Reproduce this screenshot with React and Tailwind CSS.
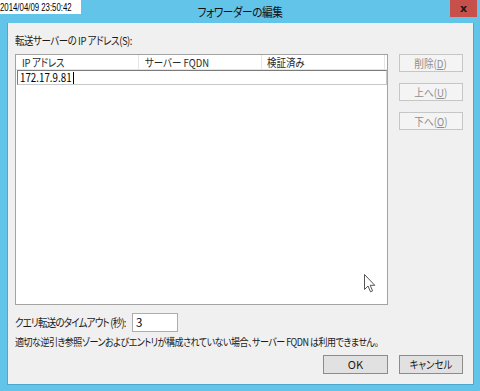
import React from 'react'

const jp = "font-['Noto_Sans_CJK_JP',sans-serif] [font-feature-settings:'palt']"

// Meiryo UI is narrow; squeeze Noto Sans CJK horizontally to match
function T({ children, className = '' }) {
  return <span className={`inline-block whitespace-nowrap origin-left scale-x-[0.86] ${className}`}>{children}</span>
}

function SideButton({ label, keyChar }) {
  return (
    <div className="w-[64px] h-[18px] border border-[#c6c6c6] bg-[#f4f4f4] flex items-center justify-center text-[11px] text-[#8d8d8d] leading-none">
      <span className="inline-block scale-x-[0.88] whitespace-nowrap">
        {label}(<span className="underline">{keyChar}</span>)
      </span>
    </div>
  )
}

export default function App() {
  return (
    <div className={`relative w-[480px] h-[391px] bg-[#62c4e8] flex flex-col ${jp}`}>
      {/* Title bar */}
      <div className="relative h-[23px] shrink-0 flex items-center justify-center">
        <span className="inline-block text-[12.5px] text-[#111] tracking-[-0.5px] pt-[2px] scale-x-[0.85]">フォワーダーの編集</span>
        <div className="absolute right-[3px] top-0 w-[27px] h-[17px] bg-[#c7514a] flex items-center justify-center">
          <span className="font-['DejaVu_Sans',sans-serif] text-[11px] font-bold text-[#1a1a1a] leading-none">x</span>
        </div>
        {/* timestamp overlay */}
        <div className="absolute left-0 top-0 h-[14px] w-[81px] bg-white flex items-center font-['Liberation_Sans',sans-serif] text-[11px] text-black leading-none">
          <span className="inline-block whitespace-nowrap origin-left scale-x-[0.71]">2014/04/09 23:50:42</span>
        </div>
      </div>

      {/* Client area */}
      <div className="ml-[7px] mr-[6px] mb-[6px] flex-1 bg-[#f0f0f0] border-x border-b border-[#4fa8cb] pl-[7px] pr-[10px] flex flex-col text-[11px] text-[#1a1a1a]">
        <div className="mt-[10px] h-[15px] leading-[15px]">
          <T className="tracking-[-0.5px]">転送サーバーの IP アドレス(S):</T>
        </div>

        <div className="mt-[6px] flex">
          {/* List */}
          <div className="w-[373px] h-[251px] border border-[#a3a3a3] bg-white flex flex-col">
            <div className="h-[15px] flex border-b border-[#e5e5e5] text-[11px] leading-[14px] text-[#2a2a2a]">
              <div className="w-[123px] border-r border-[#e5e5e5] pl-[6px]"><T className="tracking-[-0.3px]">IP アドレス</T></div>
              <div className="w-[123px] border-r border-[#e5e5e5] pl-[6px]"><T>サーバー FQDN</T></div>
              <div className="w-[123px] border-r border-[#e5e5e5] pl-[5px]"><T>検証済み</T></div>
            </div>
            <div className="ml-[1px] w-[370px] h-[15px] border border-[#7a7a7a] border-r-[#c8c8c8] border-b-[#c8c8c8] flex items-center pl-[2px]">
              <span className="inline-block origin-left scale-x-[0.85] text-[11.5px] leading-none text-black">172.17.9.81</span>
              <span className="-ml-[8px] w-[1px] h-[12px] bg-black"></span>
            </div>
          </div>

          {/* Side buttons */}
          <div className="ml-[11px] flex flex-col gap-[11px]">
            <SideButton label="削除" keyChar="D" />
            <SideButton label="上へ" keyChar="U" />
            <SideButton label="下へ" keyChar="O" />
          </div>
        </div>

        <div className="mt-[8px] flex items-center">
          <div className="w-[117px] shrink-0"><T className="tracking-[-0.9px]">クエリ転送のタイムアウト (秒):</T></div>
          <div className="w-[46px] h-[19px] border border-[#abadb3] bg-white flex items-center pl-[3px] text-[11.5px] text-black">3</div>
        </div>

        <div className="mt-[2px] h-[14px] leading-[14px]">
          <T className="tracking-[-0.6px] text-[10.5px]">適切な逆引き参照ゾーンおよびエントリが構成されていない場合、サーバー FQDN は利用できません。</T>
        </div>

        <div className="mt-[7px] flex justify-end gap-[11px]">
          <div className="w-[65px] h-[19px] border border-[#8c8c8c] bg-[#e1e1e1] flex items-center justify-center text-[11px] leading-none">OK</div>
          <div className="w-[64px] h-[19px] border border-[#8c8c8c] bg-[#e1e1e1] flex items-center justify-center text-[11px] leading-none">
            <span className="inline-block scale-x-[0.86] whitespace-nowrap">キャンセル</span>
          </div>
        </div>
      </div>

      {/* mouse pointer */}
      <svg className="absolute left-[364px] top-[274px]" width="12" height="19" viewBox="0 0 12 19">
        <path d="M0.5 0.5 L0.5 15.5 L4 12 L6.5 17.8 L8.6 16.9 L6.2 11.3 L10.8 11.3 Z" fill="white" stroke="#555" strokeWidth="1" strokeLinejoin="miter" />
      </svg>
    </div>
  )
}
